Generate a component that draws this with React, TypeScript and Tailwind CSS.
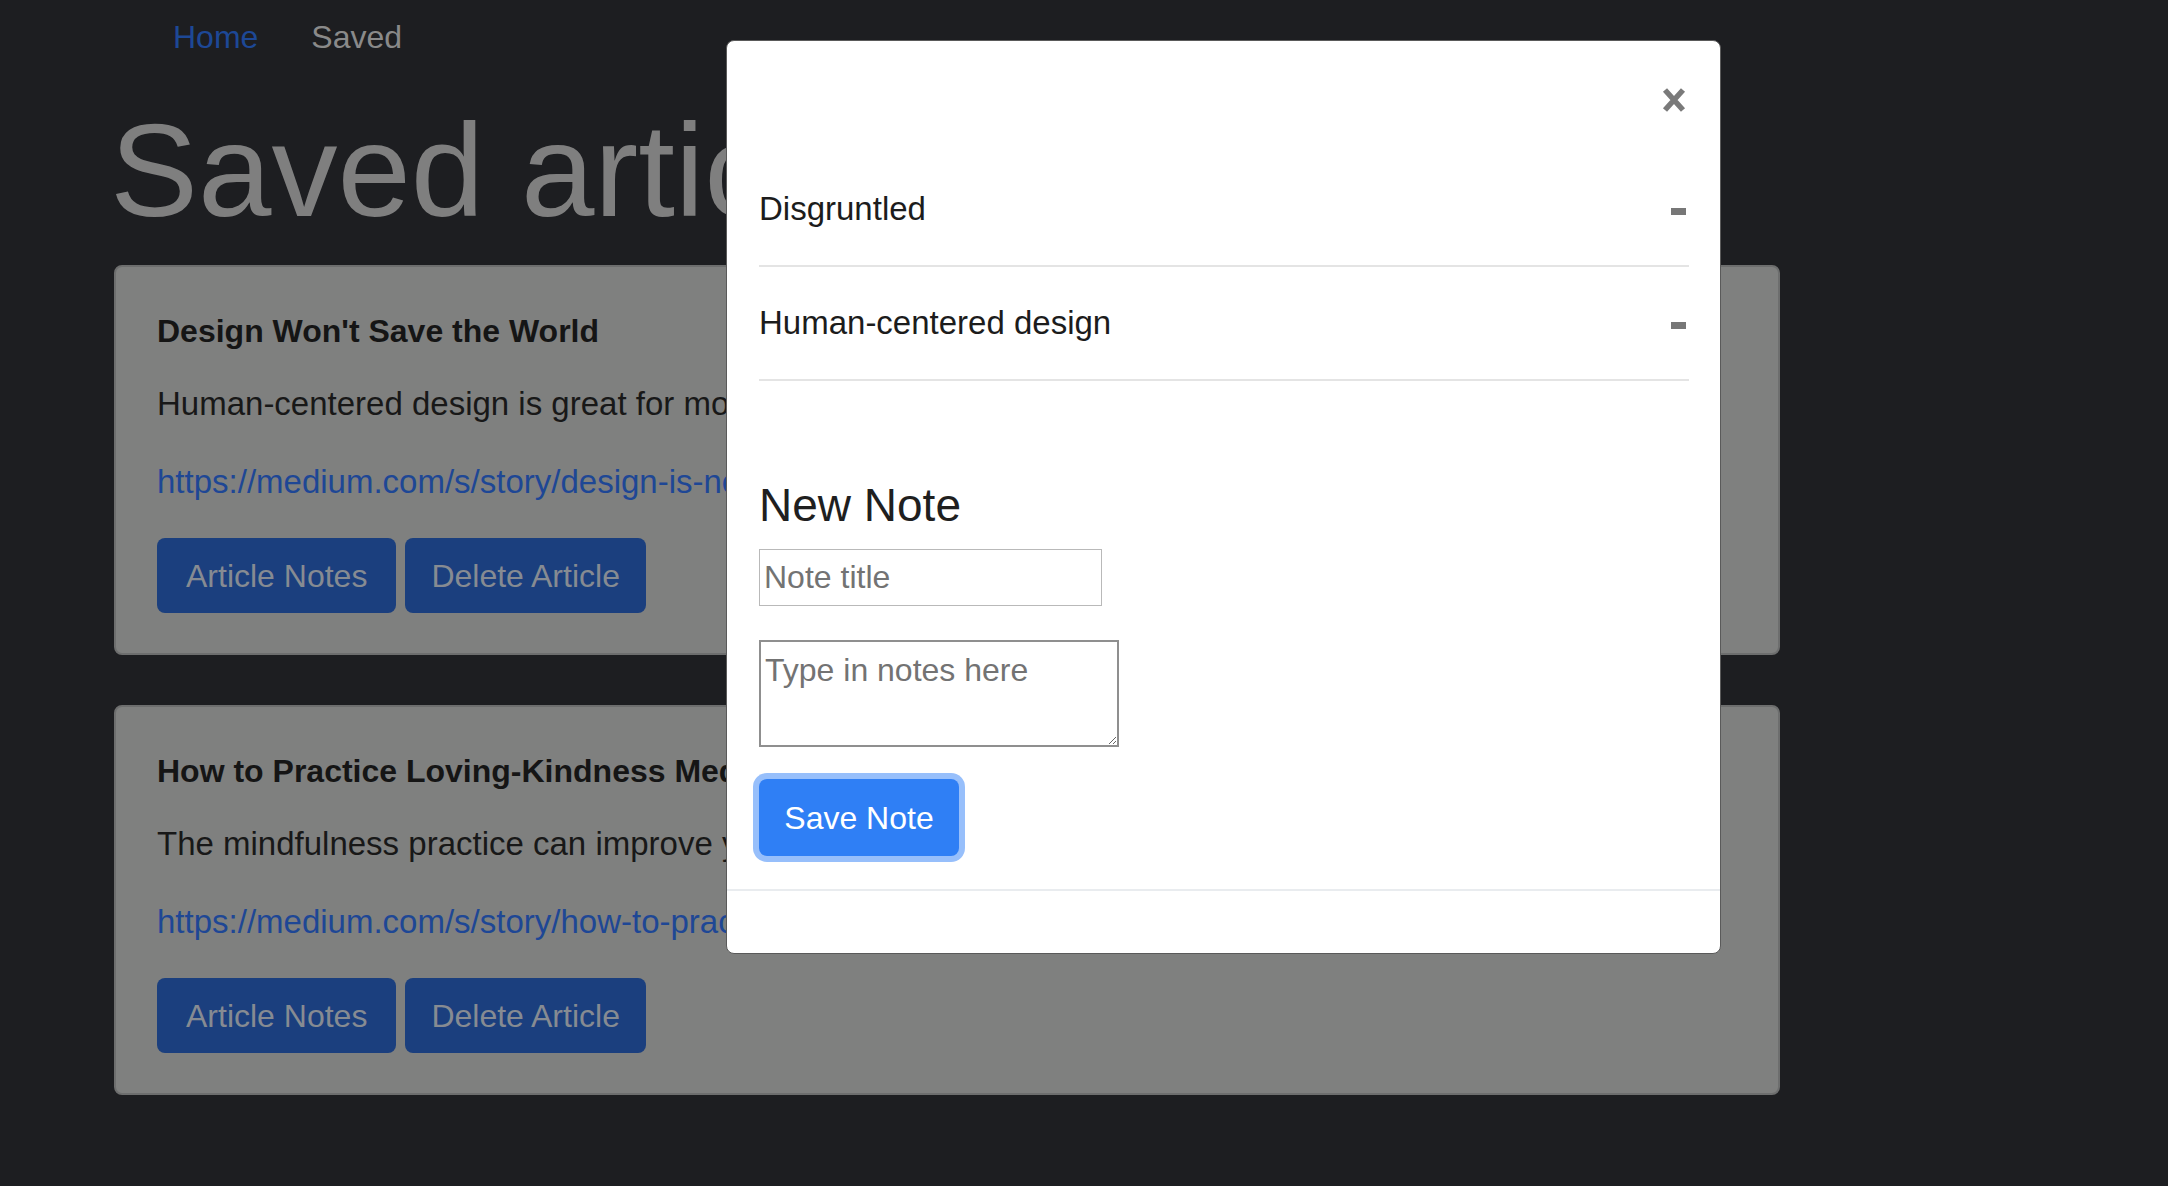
import React from 'react';

interface Article {
  title: string;
  summary: string;
  url: string;
}

const articles: Article[] = [
  {
    title: "Design Won't Save the World",
    summary: "Human-centered design is great for momentum, but it can't fix what it creates.",
    url: 'https://medium.com/s/story/design-is-not-going-to-save-the-world',
  },
  {
    title: 'How to Practice Loving-Kindness Meditation',
    summary: 'The mindfulness practice can improve your relationships with others.',
    url: 'https://medium.com/s/story/how-to-practice-loving-kindness-meditation',
  },
];

const notes = ['Disgruntled', 'Human-centered design'];

const ArticleCard: React.FC<{ article: Article }> = ({ article }) => (
  <div className="rounded-[8px] border-2 border-[#6d6e6e] bg-[#7f807f] px-[41px] pt-[45px] pb-[40px]">
    <h5 className="mb-[30px] whitespace-nowrap text-[32px] font-bold leading-[38px] text-[#151515]">
      {article.title}
    </h5>
    <p className="mb-[30px] whitespace-nowrap text-[33px] leading-[48px] text-[#181818]">{article.summary}</p>
    <a className="mb-[32px] block whitespace-nowrap text-[33px] leading-[48px] text-[#1e4795]">{article.url}</a>
    <div className="flex gap-[9px]">
      <button className="h-[75px] rounded-[8px] bg-[#1b3f7e] px-[29px] text-[32px] text-[#868b92]">
        Article Notes
      </button>
      <button className="h-[75px] rounded-[8px] bg-[#1b3f7e] px-[26px] text-[32px] text-[#868b92]">
        Delete Article
      </button>
    </div>
  </div>
);

const NotesModal: React.FC = () => (
  <div className="absolute left-[726px] top-[40px] flex h-[914px] w-[995px] flex-col rounded-[8px] border border-[#5a5a5a] bg-white">
    <div className="flex h-[112px] justify-end pt-[46px] pr-[34px]">
      <svg width="24" height="26" viewBox="0 0 24 26" className="text-[#7a7a7a]">
        <path d="M3 3 L21 23 M21 3 L3 23" stroke="currentColor" strokeWidth="5.5" strokeLinecap="butt" />
      </svg>
    </div>
    <div className="flex-1 pl-[32px] pr-[31px] pb-[33px]">
      {notes.map((n) => (
        <div key={n} className="flex items-center justify-between border-b-2 border-[#e4e4e4] py-[32px] pr-[3px]">
          <span className="text-[33px] leading-[48px] text-[#1c1c1c]">{n}</span>
          <span className="mt-[4px] block h-[7px] w-[15px] bg-[#777777]" />
        </div>
      ))}
      <h3 className="mt-[97px] text-[46px] leading-[55px] text-[#1f1f1f]">New Note</h3>
      <input
        placeholder="Note title"
        className="mt-[16px] block h-[57px] w-[343px] border border-[#b9b9b9] px-[4px] text-[32px] text-[#222] outline-none placeholder:text-[#737373]"
      />
      <textarea
        placeholder="Type in notes here"
        className="mt-[34px] block h-[107px] w-[360px] border-2 border-[#8f8f8f] px-[4px] pt-[6px] text-[32px] leading-[45px] text-[#222] outline-none placeholder:text-[#737373]"
      />
      <button className="mt-[32px] block h-[77px] w-[200px] rounded-[8px] bg-[#2f7ff5] text-[32px] text-white shadow-[0_0_0_6px_#97bffb]">
        Save Note
      </button>
    </div>
    <div className="h-[64px] border-t-2 border-[#e9ecef]" />
  </div>
);

export default function App() {
  return (
    <div className="relative h-[1186px] w-full overflow-hidden bg-[#1d1e21] font-['Liberation_Sans',Arial,sans-serif]">
      <nav className="flex pl-[146px] pt-[13px]">
        <a className="px-[27px] text-[32px] leading-[48px] text-[#1d4896]">Home</a>
        <a className="px-[26px] text-[32px] leading-[48px] text-[#8a8a8a]">Saved</a>
      </nav>
      <h1 className="mt-[31px] whitespace-nowrap pl-[110px] text-[132px] leading-[158px] text-[#7f7f7f]">
        Saved articles
      </h1>
      <div className="ml-[114px] mt-[15px] flex w-[1666px] flex-col gap-[50px]">
        {articles.map((a) => (
          <ArticleCard key={a.title} article={a} />
        ))}
      </div>
      <NotesModal />
    </div>
  );
}
